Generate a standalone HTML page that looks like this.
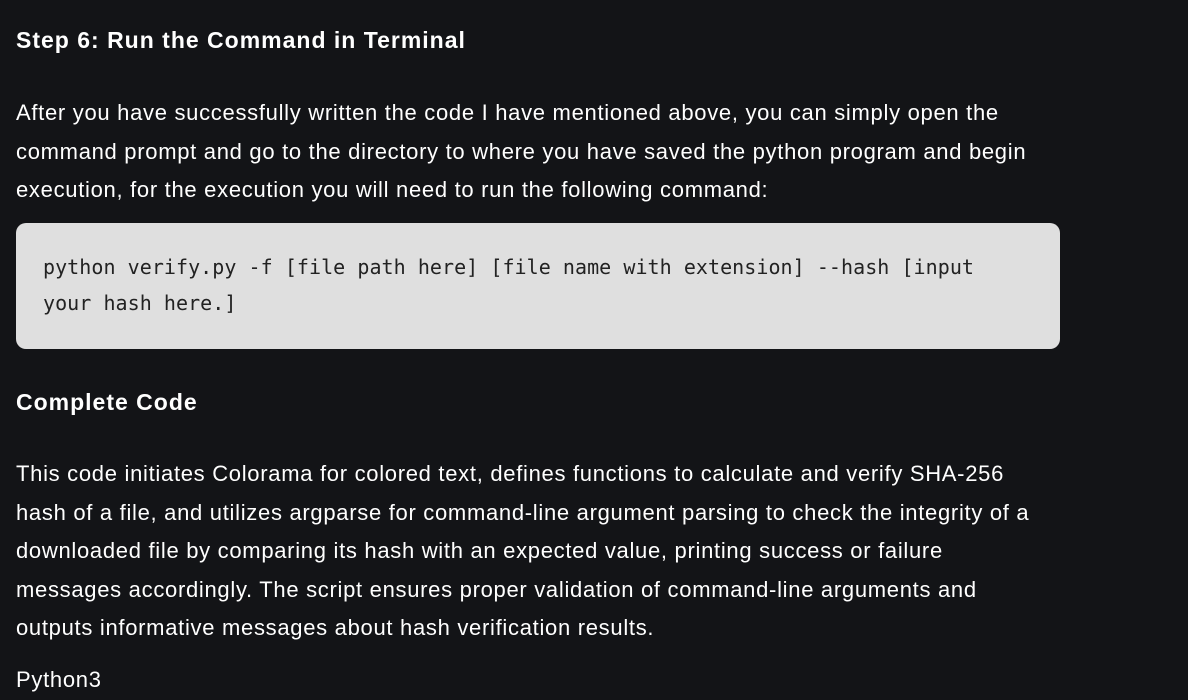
<!DOCTYPE html>
<html><head><style>
body{margin:0;background:#131417;width:1188px;height:698px;overflow:hidden;font-family:"Liberation Sans",sans-serif;color:#fff}
.a{position:absolute;left:16px;white-space:nowrap}
h{font-weight:bold;font-size:23px;letter-spacing:1px}
p{margin:0;font-size:22px;line-height:38.5px;letter-spacing:0.7px}
.code{position:absolute;left:16px;top:223px;width:1044px;height:126px;background:#dfdfdf;border-radius:10px}
.code div{position:absolute;left:27px;font-family:"DejaVu Sans Mono","Liberation Mono",monospace;font-size:20px;color:#222;white-space:nowrap;letter-spacing:0.05px}
</style></head><body>
<div class="a" style="top:27px"><h>Step 6: Run the Command in Terminal</h></div>
<div class="a" style="top:94px"><p>After you have successfully written the code I have mentioned above, you can simply open the<br>command prompt and go to the directory to where you have saved the python program and begin<br>execution, for the execution you will need to run the following command:</p></div>
<div class="code"><div style="top:32px">python verify.py -f [file path here] [file name with extension] --hash [input</div><div style="top:68px">your hash here.]</div></div>
<div class="a" style="top:389px"><h>Complete Code</h></div>
<div class="a" style="top:455px"><p>This code initiates Colorama for colored text, defines functions to calculate and verify SHA-256<br>hash of a file, and utilizes argparse for command-line argument parsing to check the integrity of a<br>downloaded file by comparing its hash with an expected value, printing success or failure<br>messages accordingly. The script ensures proper validation of command-line arguments and<br>outputs informative messages about hash verification results.</p></div>
<div class="a" style="top:661px"><p>Python3</p></div>
</body></html>
